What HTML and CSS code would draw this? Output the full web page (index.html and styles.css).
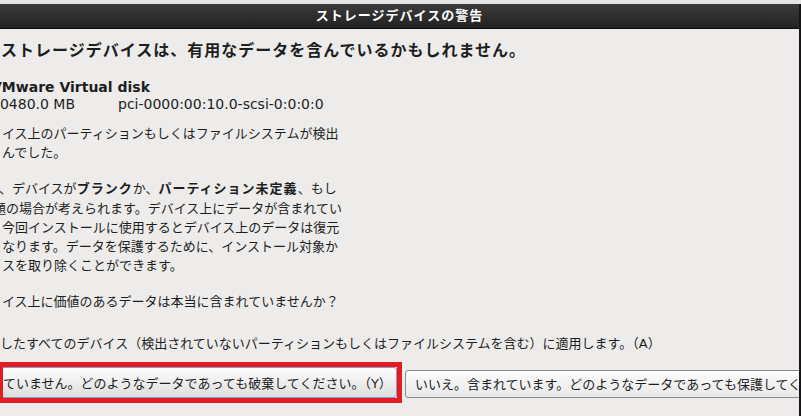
FILE: index.html
```html
<!DOCTYPE html>
<html lang="ja">
<head>
    <meta charset="UTF-8">
    <title>ストレージデバイスの警告</title>
    <link rel="stylesheet" href="styles.css">
</head>
<body>
    <div class="top-strip"></div>
    <div class="window">
        <div class="titlebar">ストレージデバイスの警告</div>
        <div class="content">
            <h1 class="heading">ストレージデバイスは、有用なデータを含んでいるかもしれません。</h1>

            <div class="device">
                <div class="device-name">VMware Virtual disk</div>
                <div class="device-row">
                    <span class="device-size">20480.0 MB</span>
                    <span>pci-0000:00:10.0-scsi-0:0:0:0</span>
                </div>
            </div>

            <div class="para">
                <div class="line">イス上のパーティションもしくはファイルシステムが検出</div>
                <div class="line">んでした。</div>
            </div>

            <div class="para">
                <div class="line comma">、デバイスが<b class="strong">ブランク</b>か、<b class="strong">パーティション未定義</b>、もし</div>
                <div class="line cut">題の場合が考えられます。デバイス上にデータが含まれてい</div>
                <div class="line">今回インストールに使用するとデバイス上のデータは復元</div>
                <div class="line">なります。データを保護するために、インストール対象か</div>
                <div class="line">スを取り除くことができます。</div>
            </div>

            <div class="para question">
                <div class="line">イス上に価値のあるデータは本当に含まれていませんか？</div>
            </div>

            <div class="para apply">
                <div class="line">したすべてのデバイス（検出されていないパーティションもしくはファイルシステムを含む）に適用します。（A）</div>
            </div>

            <div class="actions">
                <div class="focus-mark">
                    <button class="btn btn-yes">ていません。どのようなデータであっても破棄してください。（Y）</button>
                </div>
                <button class="btn btn-no">いいえ。含まれています。どのようなデータであっても保護してください。（N）</button>
            </div>
        </div>
    </div>
</body>
</html>
```

FILE: styles.css
```css
body {
    margin: 0;
    background-color: #edecea;
    font-family: "DejaVu Sans", "Noto Sans CJK JP", sans-serif;
    color: #1e1e1e;
    overflow: hidden;
}
.top-strip {
    height: 4px;
    background-color: #e6e5e3;
}
.window {
    height: 412px;
    border-right: 2px solid #151515;
    overflow: hidden;
}
.titlebar {
    height: 24px;
    line-height: 24px;
    background: linear-gradient(#3c3c3c, #222222);
    border-bottom: 1px solid #0d0d0d;
    color: #ffffff;
    text-align: center;
    font-size: 13px;
    font-weight: bold;
    letter-spacing: 1px;
}
.content {
    padding-top: 12px;
}
.heading {
    margin: 0;
    padding-left: 1px;
    font-size: 16px;
    line-height: 20px;
    font-weight: bold;
    letter-spacing: 1px;
    white-space: nowrap;
}
.device {
    margin: 18px 0 0 -9px;
    font-size: 14px;
    line-height: 17px;
}
.device-name {
    font-weight: bold;
}
.device-row {
    display: flex;
}
.device-size {
    width: 127px;
}
.para {
    margin-top: 11px;
    padding-left: 2px;
    font-size: 13px;
    line-height: 19.2px;
    white-space: nowrap;
}
.para + .para {
    margin-top: 17px;
}
.para.apply {
    margin-top: 22px;
    padding-left: 0;
}
.line.comma {
    margin-left: -3px;
}
.line.cut {
    margin-left: -9px;
}
.strong {
    font-weight: bold;
    letter-spacing: 1px;
}
.actions {
    display: flex;
    gap: 3px;
    margin-top: 9px;
    margin-left: -1px;
}
.focus-mark {
    flex-shrink: 0;
    border: 5px solid #e51b23;
    border-left-width: 4px;
}
.btn {
    display: block;
    flex-shrink: 0;
    margin: 0;
    font-family: inherit;
    font-size: 13px;
    color: #1e1e1e;
    white-space: nowrap;
    text-align: left;
    background: linear-gradient(#fdfdfd, #dedede);
    border: 1px solid #8a8a8a;
    border-radius: 3px;
}
.btn-yes {
    width: 394px;
    height: 31px;
    padding: 0;
    border-color: #7f9ec6;
    border-left: none;
    border-radius: 0 3px 3px 0;
}
.btn-no {
    align-self: flex-end;
    height: 28px;
    margin-bottom: 5px;
    padding: 0 9px;
    background: linear-gradient(#fcfcfc, #e8e8e8);
}
```
